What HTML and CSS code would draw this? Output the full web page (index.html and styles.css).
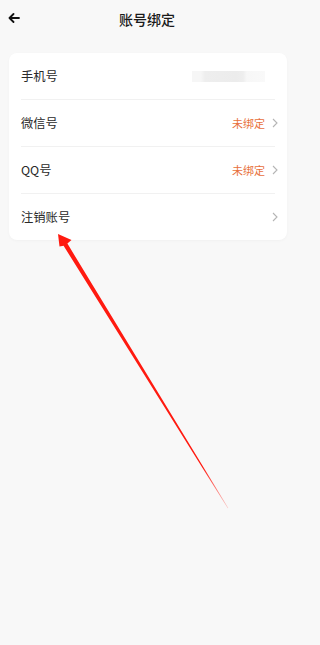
FILE: index.html
```html
<!DOCTYPE html>
<html lang="zh">
<head>
<meta charset="utf-8">
<link rel="stylesheet" href="styles.css">
</head>
<body>
<div class="page">
  <header class="topbar">
    <svg class="back" width="12" height="10" viewBox="0 0 12 10"><path d="M11 5H2M5.5 1L1.5 5L5.5 9" fill="none" stroke="#111" stroke-width="1.8" stroke-linecap="round" stroke-linejoin="round"/></svg>
    <h1 class="title">账号绑定</h1>
  </header>
  <section class="card">
    <div class="row">
      <span class="label">手机号</span>
      <span class="blur"></span>
    </div>
    <div class="row">
      <span class="label">微信号</span>
      <span class="right"><span class="status">未绑定</span><svg class="chev" width="6" height="10" viewBox="0 0 6 10"><path d="M1 1L5 5L1 9" fill="none" stroke="#b5b5b5" stroke-width="1.1"/></svg></span>
    </div>
    <div class="row">
      <span class="label">QQ号</span>
      <span class="right"><span class="status">未绑定</span><svg class="chev" width="6" height="10" viewBox="0 0 6 10"><path d="M1 1L5 5L1 9" fill="none" stroke="#b5b5b5" stroke-width="1.1"/></svg></span>
    </div>
    <div class="row">
      <span class="label">注销账号</span>
      <span class="right"><svg class="chev" width="6" height="10" viewBox="0 0 6 10"><path d="M1 1L5 5L1 9" fill="none" stroke="#b5b5b5" stroke-width="1.1"/></svg></span>
    </div>
  </section>
  <svg class="annot" width="294" height="645" viewBox="0 0 294 645">
    <defs>
      <linearGradient id="fade" x1="58" y1="234" x2="228" y2="508" gradientUnits="userSpaceOnUse">
        <stop offset="0" stop-color="#ff1a10"/>
        <stop offset="0.85" stop-color="#ff1a10"/>
        <stop offset="1" stop-color="#ff1a10" stop-opacity="0.2"/>
      </linearGradient>
    </defs>
    <polygon points="58,234 71.5,240 67.4,243.6 228.3,508 227.7,508.2 63.6,245.8 59.5,246.5" fill="url(#fade)"/>
  </svg>
</div>
</body>
</html>
```
FILE: styles.css
```css
html, body {
  margin: 0;
  padding: 0;
  background: #f8f8f8;
}
body {
  font-family: "Noto Sans CJK SC", "Noto Sans", sans-serif;
  color: #222;
}
.page {
  position: relative;
  width: 294px;
  height: 645px;
  overflow: hidden;
}
.topbar {
  height: 37px;
  display: flex;
  align-items: center;
  justify-content: center;
  position: relative;
}
.back {
  position: absolute;
  left: 8px;
  top: 13px;
}
.title {
  margin: 0;
  font-size: 14px;
  font-weight: 500;
  color: #1a1a1a;
  line-height: 20px;
}
.card {
  margin: 16px 7px 0 9px;
  background: #fff;
  border-radius: 8px;
  padding: 0 12px;
  box-shadow: 0 1px 3px rgba(0,0,0,0.03);
}
.row {
  height: 46px;
  display: flex;
  align-items: center;
  justify-content: space-between;
  border-bottom: 1px solid #f1f1f1;
}
.row:last-child {
  border-bottom: none;
}
.label {
  font-size: 12.3px;
  color: #2a2a2a;
}
.right {
  display: flex;
  align-items: center;
  margin-right: -3px;
}
.status {
  font-size: 11px;
  color: #e8703c;
  margin-right: 7px;
}
.blur {
  width: 73px;
  height: 11px;
  margin-right: 10px;
  background: linear-gradient(90deg, #f6f6f6 0%, #f6f6f6 12%, #eeeeee 18%, #ececec 60%, #eeeeee 70%, #f7f7f7 75%, #f9f9f9 100%);
}
.annot {
  position: absolute;
  left: 0;
  top: 0;
  pointer-events: none;
}
```
